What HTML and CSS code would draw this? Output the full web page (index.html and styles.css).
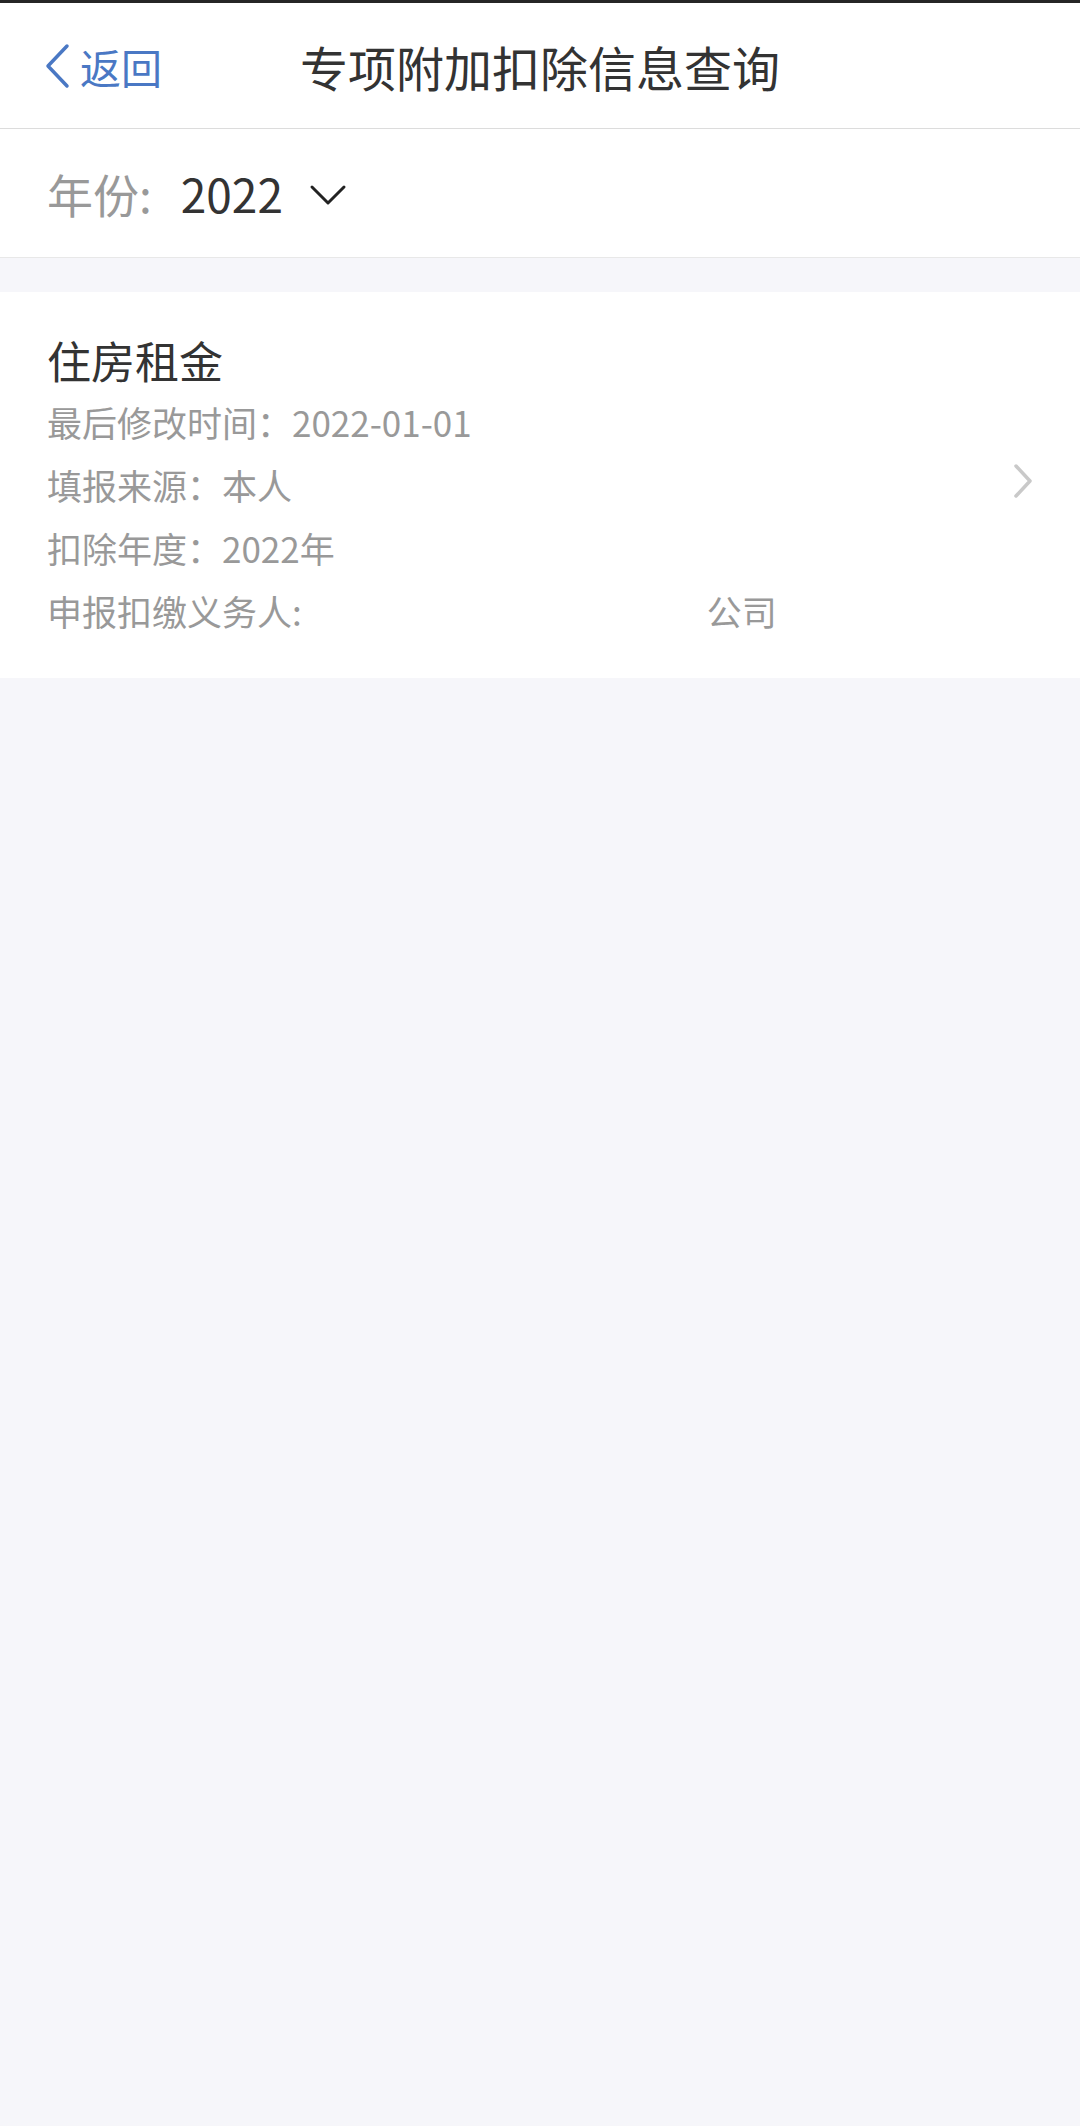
FILE: index.html
```html
<!DOCTYPE html>
<html lang="zh-CN">
<head>
    <meta charset="UTF-8">
    <meta name="viewport" content="width=device-width, initial-scale=1.0">
    <title>专项附加扣除信息查询</title>
    <link rel="stylesheet" href="styles.css">
</head>
<body>
    <header class="nav-bar">
        <a class="back" href="#">
            <svg class="back-icon" width="26" height="46" viewBox="0 0 26 46">
                <polyline points="23,3 4,23 23,43" fill="none" stroke="#4a78c4" stroke-width="3.5" stroke-linecap="round" stroke-linejoin="round"/>
            </svg>
            <span>返回</span>
        </a>
        <h1 class="nav-title">专项附加扣除信息查询</h1>
        <div></div>
    </header>

    <div class="year-picker">
        <span class="year-label">年份:</span>
        <span class="year-value">2022</span>
        <svg class="year-arrow" width="38" height="22" viewBox="0 0 38 22">
            <polyline points="3,3 19,19 35,3" fill="none" stroke="#222" stroke-width="3" stroke-linecap="round" stroke-linejoin="round"/>
        </svg>
    </div>

    <div class="deduction-card">
        <div class="deduction-info">
            <div class="deduction-type">住房租金</div>
            <div class="info-row">最后修改时间：2022-01-01</div>
            <div class="info-row">填报来源：本人</div>
            <div class="info-row">扣除年度：2022年</div>
            <div class="info-row">申报扣缴义务人:<span class="company">公司</span></div>
        </div>
        <svg class="card-arrow" width="22" height="36" viewBox="0 0 22 36">
            <polyline points="4,3 18,18 4,33" fill="none" stroke="#c9c9c9" stroke-width="3.5" stroke-linecap="round" stroke-linejoin="round"/>
        </svg>
    </div>
</body>
</html>
```

FILE: styles.css
```css
body {
    font-family: "Noto Sans CJK SC", "Noto Sans", sans-serif;
    background: #f6f6fa;
    margin: 0;
    color: #333;
}
.nav-bar {
    display: grid;
    grid-template-columns: 1fr auto 1fr;
    align-items: center;
    height: 125px;
    background: #fff;
    border-top: 3px solid #262626;
    border-bottom: 1px solid #dcdcdc;
}
.back {
    display: flex;
    align-items: center;
    padding-left: 44px;
    color: #4a78c4;
    text-decoration: none;
    font-size: 41px;
}
.back-icon {
    margin-right: 10px;
}
.nav-title {
    margin: 0;
    font-size: 48px;
    font-weight: normal;
    color: #333;
}
.year-picker {
    display: flex;
    align-items: center;
    height: 128px;
    padding-left: 47px;
    background: #fff;
    border-bottom: 1px solid #e8e8e8;
    font-size: 46px;
}
.year-label {
    color: #999;
}
.year-value {
    margin-left: 29px;
    color: #333;
}
.year-arrow {
    margin-left: 26px;
    margin-top: 4px;
}
.deduction-card {
    display: flex;
    align-items: center;
    margin-top: 34px;
    padding: 38px 46px 36px 47px;
    background: #fff;
}
.deduction-info {
    flex: 1;
}
.deduction-type {
    font-size: 44px;
    line-height: 60px;
    color: #333;
}
.info-row {
    font-size: 35px;
    line-height: 63px;
    color: #999;
}
.company {
    margin-left: 405px;
}
.card-arrow {
    margin-top: -10px;
}
```
